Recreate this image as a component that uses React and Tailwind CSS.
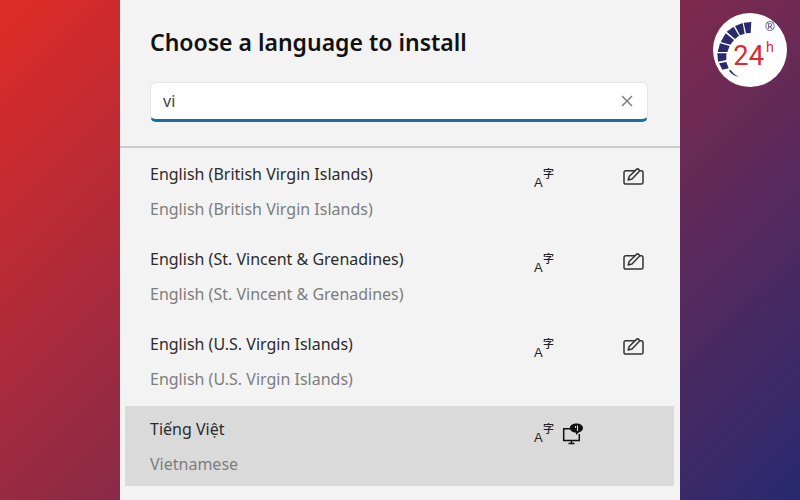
import { useState } from 'react';

const languages = [
  { id: 'en-VG', name: 'English (British Virgin Islands)', label: 'English (British Virgin Islands)', handwriting: true },
  { id: 'en-VC', name: 'English (St. Vincent & Grenadines)', label: 'English (St. Vincent & Grenadines)', handwriting: true },
  { id: 'en-VI', name: 'English (U.S. Virgin Islands)', label: 'English (U.S. Virgin Islands)', handwriting: true },
  { id: 'vi-VN', name: 'Tiếng Việt', label: 'Vietnamese', display: true },
];

const LanguagePackIcon = () => (
  <svg className="h-5 w-5 overflow-visible" viewBox="0 0 20 20" fill="#222222" aria-hidden="true">
    <text x="0" y="19" fontSize="13" fontFamily="Liberation Sans, sans-serif">A</text>
    <text x="9" y="10" fontSize="11" fontWeight="500" fontFamily="Noto Sans CJK SC, sans-serif">字</text>
  </svg>
);

const DisplayLanguageIcon = () => (
  <svg className="h-[22px] w-[22px]" viewBox="0 0 22 22" fill="none" stroke="#111111" strokeWidth="1.5" aria-hidden="true">
    <path d="M8 5.700H1.700v11.800h15.600V11" />
    <path d="M9.500 17.500v3M6.500 20.400h6" />
    <path d="M14.500.500c3.800 0 6.500 1.800 6.500 4.600 0 2.200-1.700 3.800-4.200 4.300L14 12V9.700C10.500 9.600 7.800 7.800 7.800 5.100S10.700.500 14.500.500Z" fill="#111111" stroke="none" />
    <path d="M15.500 2.500v5.500M13.500 3v2" stroke="#dadada" strokeWidth="1.1" />
  </svg>
);

const HandwritingIcon = () => (
  <svg className="h-[18px] w-[21px]" viewBox="0 0 21 18" fill="none" stroke="#333333" strokeWidth="1.5" strokeLinejoin="round" aria-hidden="true">
    <path d="M12 2.700H2.700a1.700 1.700 0 0 0-1.700 1.700v10a1.700 1.700 0 0 0 1.700 1.700h15.600a1.700 1.700 0 0 0 1.700-1.700v-10a1.700 1.700 0 0 0-1.700-1.700h-1.800" />
    <path d="m5.200 12 1-3.500 7.300-7.100a1.700 1.700 0 0 1 2.400 2.400L9 11Z" />
  </svg>
);

const Logo = () => (
  <svg className="h-[74px] w-[74px]" viewBox="39 39 222 222" role="img" aria-label="24h">
    <circle cx="150" cy="150" r="111" fill="#ffffff" />
    <g fill="#29296b">
      <path d="M131 68 154 66 152 99 138 100Z" />
      <path d="M105 78 128 69 134 101 120 106Z" />
      <path d="M80 95 101 80 117 107 105 117Z" />
      <path d="M62 126 77 100 102 120 91 134Z" />
      <path d="M53 156 60 130 89 138 82 156Z" />
      <path d="M54 185 52 160 79 160 79 180Z" />
      <path d="M67 209 57 190 79 186 86 205Z" />
      <path d="M87 212 91 209Q101 223 116 230Q98 227 87 212Z" />
    </g>
    <g fill="#dc2a30" fontFamily="Roboto, sans-serif">
      <text x="100" y="195" fontSize="82">24</text>
      <text x="198" y="157" fontSize="43">h</text>
    </g>
    <text x="196" y="93" fontSize="38" fill="#29296b" fontFamily="Liberation Sans, sans-serif">®</text>
  </svg>
);

const App = () => {
  const [query, setQuery] = useState('vi');
  const [selected, setSelected] = useState('vi-VN');

  return (
    <div className="relative min-h-screen bg-[linear-gradient(135deg,#e02b26,#28296f)] font-['Noto_Sans',sans-serif]">
      <main className="mx-auto min-h-screen w-[70%] bg-[#f3f3f3]">
        <header className="border-b-2 border-[#cccccc] pt-6 pr-8 pb-6 pl-[30px]">
          <h1 className="text-[23px] leading-9 font-semibold text-[#111111]">Choose a language to install</h1>
          <div className="mt-[22px] flex h-10 items-center rounded-md border border-b-3 border-[#e5e5e5] border-b-[#1b6ca5] bg-white pr-3 pl-3">
            <input
              type="text"
              aria-label="Search languages"
              value={query}
              onChange={e => setQuery(e.target.value)}
              className="min-w-0 flex-1 bg-transparent text-base leading-6 text-[#444444] outline-none"
            />
            <button type="button" aria-label="Clear" onClick={() => setQuery('')} className="flex h-6 w-4 items-center justify-center">
              <svg className="h-3 w-3" viewBox="0 0 12 12" fill="none" stroke="#777777" strokeWidth="1.4">
                <path d="m1 1 10 10M11 1 1 11" />
              </svg>
            </button>
          </div>
        </header>
        <ul className="flex flex-col gap-[5px] py-[3px] pr-[6px] pl-[5px]">
          {languages.map(lang => (
            <li key={lang.id}>
              <button
                type="button"
                aria-pressed={selected === lang.id}
                onClick={() => setSelected(lang.id)}
                className={`grid h-20 w-full grid-cols-[1fr_89px_21px] items-start pt-[11px] pr-[30px] pl-[25px] text-left ${selected === lang.id ? 'bg-[#dadada]' : ''}`}
              >
                <span className="flex flex-col gap-[11px] text-base leading-6">
                  <span className="text-[#2b2b2b]">{lang.name}</span>
                  <span className="text-[#7d7d7d]">{lang.label}</span>
                </span>
                <span className="flex gap-2 pt-[6px]">
                  <LanguagePackIcon />
                  {lang.display && <DisplayLanguageIcon />}
                </span>
                <span className="pt-[6px]">{lang.handwriting && <HandwritingIcon />}</span>
              </button>
            </li>
          ))}
        </ul>
      </main>
      <div className="absolute top-[13px] right-[13px]">
        <Logo />
      </div>
    </div>
  );
};

export default App;
